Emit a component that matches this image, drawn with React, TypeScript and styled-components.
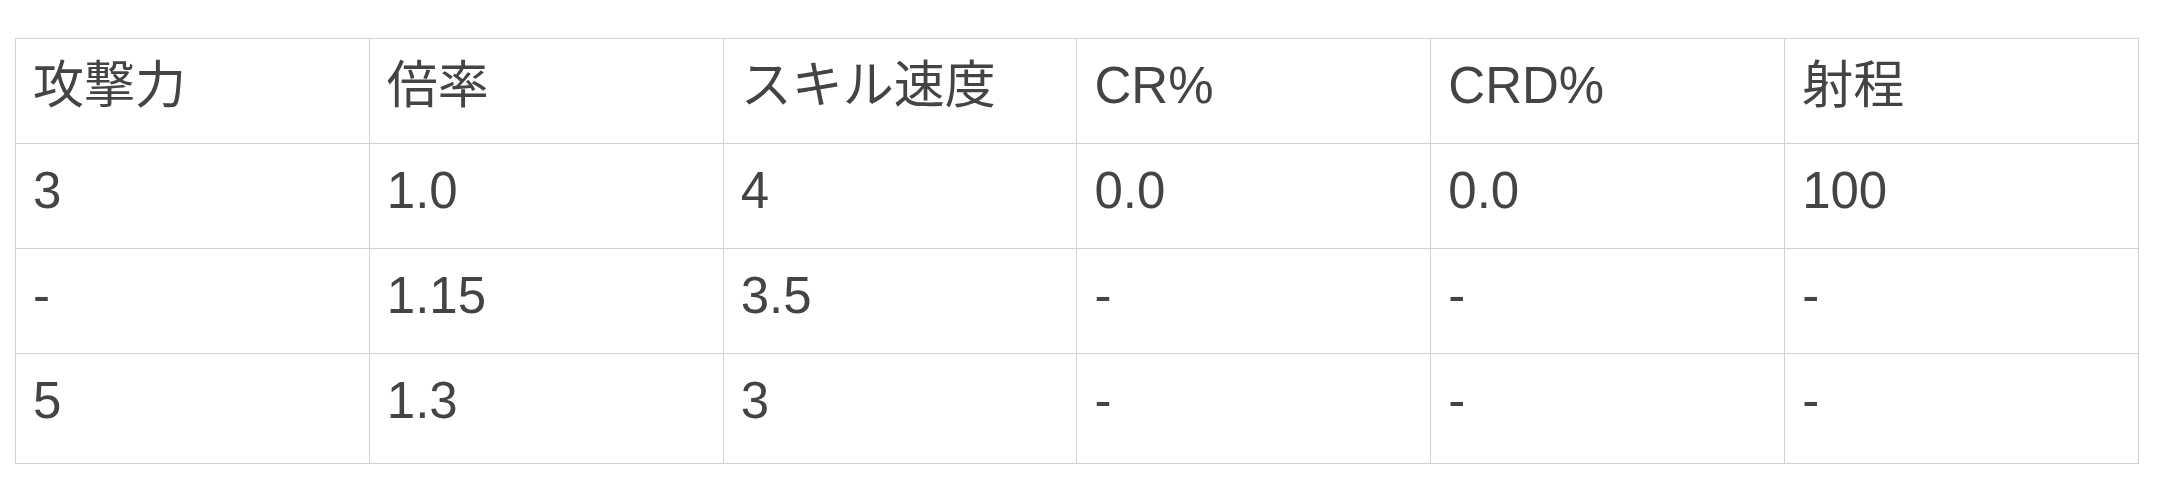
import React from "react";
import styled, { createGlobalStyle } from "styled-components";

const GlobalStyle = createGlobalStyle`
    html, body {
        margin: 0;
        padding: 0;
        background: #ffffff;
    }
`;

const Page = styled.div`
    padding: 38px 0 0 15px;
`;

const StatsTable = styled.table`
    width: 2124px;
    table-layout: fixed;
    border-collapse: collapse;
    font-family: "Liberation Sans", "Noto Sans CJK JP", sans-serif;
    font-size: 51px;
    color: #444444;

    tbody tr:last-child td {
        padding-bottom: 26px;
    }
`;

const Cell = styled.td`
    border: 1px solid #d2d2d2;
    padding: 11px 17px 21px;
    line-height: 72px;
    text-align: left;
    font-weight: normal;
    white-space: nowrap;
    vertical-align: top;
`;

const HeadCell = styled(Cell).attrs({ as: "th" })``;

const headers = ["攻撃力", "倍率", "スキル速度", "CR%", "CRD%", "射程"];

const rows: string[][] = [
    ["3", "1.0", "4", "0.0", "0.0", "100"],
    ["-", "1.15", "3.5", "-", "-", "-"],
    ["5", "1.3", "3", "-", "-", "-"],
];

const App: React.FC = () => {
    return (
        <>
            <GlobalStyle />
            <Page>
                <StatsTable>
                    <thead>
                        <tr>
                            {headers.map((h) => (
                                <HeadCell key={h}>{h}</HeadCell>
                            ))}
                        </tr>
                    </thead>
                    <tbody>
                        {rows.map((row, i) => (
                            <tr key={i}>
                                {row.map((value, j) => (
                                    <Cell key={`${i}-${j}`}>{value}</Cell>
                                ))}
                            </tr>
                        ))}
                    </tbody>
                </StatsTable>
            </Page>
        </>
    );
};

export default App;
